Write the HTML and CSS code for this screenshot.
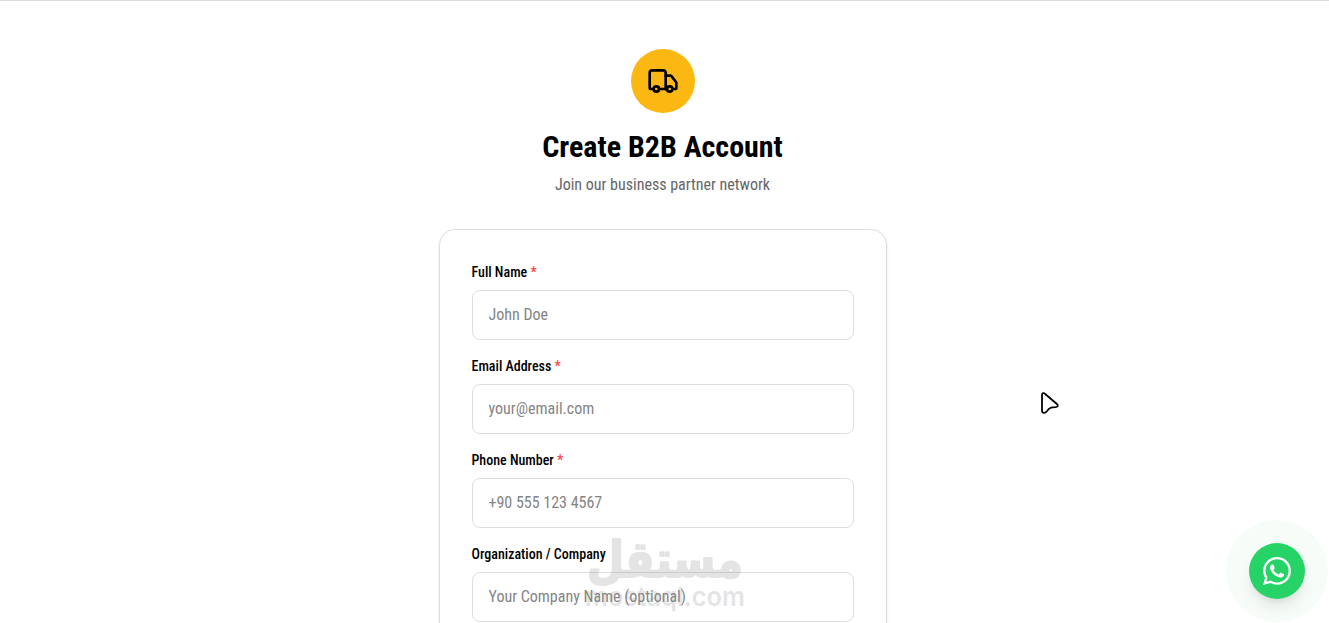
FILE: index.html
```html
<!DOCTYPE html>
<html lang="en">
<head>
  <meta charset="UTF-8" />
  <meta name="viewport" content="width=device-width, initial-scale=1" />
  <title>Create B2B Account</title>
  <link rel="stylesheet" href="styles.css">
</head>
<body>
  <main>
    <header>
      <div class="header-icon">
        <svg width="32" height="32" viewBox="0 0 24 24" fill="none" stroke="currentColor" stroke-width="2" stroke-linecap="round" stroke-linejoin="round">
          <path d="M14 18V6a2 2 0 0 0-2-2H4a2 2 0 0 0-2 2v11a1 1 0 0 0 1 1h2" />
          <path d="M15 18H9" />
          <path d="M19 18h2a1 1 0 0 0 1-1v-3.65a1 1 0 0 0-.22-.624l-3.48-4.35A1 1 0 0 0 17.52 8H14" />
          <circle cx="17" cy="18" r="2" />
          <circle cx="7" cy="18" r="2" />
        </svg>
      </div>
      <h1>Create B2B Account</h1>
      <p>Join our business partner network</p>
    </header>

    <form class="card">
      <div class="field">
        <label for="fullName">Full Name <span class="required">*</span></label>
        <input type="text" id="fullName" placeholder="John Doe" />
      </div>
      <div class="field">
        <label for="email">Email Address <span class="required">*</span></label>
        <input type="email" id="email" placeholder="your@email.com" />
      </div>
      <div class="field">
        <label for="phone">Phone Number <span class="required">*</span></label>
        <input type="tel" id="phone" placeholder="+90 555 123 4567" />
      </div>
      <div class="field">
        <label for="company">Organization / Company</label>
        <input type="text" id="company" placeholder="Your Company Name (optional)" />
      </div>
    </form>
  </main>

  <div class="watermark">
    <svg width="170" height="90" viewBox="0 0 170 90">
      <text class="watermark-ar" x="80" y="47" text-anchor="middle" textLength="156" lengthAdjust="spacingAndGlyphs">مستقل</text>
      <text class="watermark-en" x="0" y="76" textLength="160" lengthAdjust="spacingAndGlyphs">mostaql.com</text>
    </svg>
  </div>

  <svg class="cursor" width="20" height="24" viewBox="0 0 20 24" fill="#fff" stroke="#000" stroke-width="1.8" stroke-linejoin="round">
    <path d="M2 3.8C2 2 3.7 1.6 4.9 2.7L16.9 13C18.6 14.5 17.8 16 15.5 16.2C10.7 16.3 9.2 17 6.9 20.2C4.8 22.8 2 22.2 2 19.8Z" />
  </svg>

  <a class="whatsapp" href="#" aria-label="WhatsApp">
    <svg width="28" height="28" viewBox="0 0 24 24" fill="currentColor">
      <path d="M17.472 14.382c-.297-.149-1.758-.867-2.03-.967-.273-.099-.471-.148-.67.15-.197.297-.767.966-.94 1.164-.173.199-.347.223-.644.075-.297-.15-1.255-.463-2.39-1.475-.883-.788-1.48-1.761-1.653-2.059-.173-.297-.018-.458.13-.606.134-.133.298-.347.446-.52.149-.174.198-.298.298-.497.099-.198.05-.371-.025-.52-.075-.149-.669-1.612-.916-2.207-.242-.579-.487-.5-.669-.51-.173-.008-.371-.01-.57-.01-.198 0-.52.074-.792.372-.272.297-1.04 1.016-1.04 2.479 0 1.462 1.065 2.875 1.213 3.074.149.198 2.096 3.2 5.077 4.487.709.306 1.262.489 1.694.625.712.227 1.36.195 1.871.118.571-.085 1.758-.719 2.006-1.413.248-.694.248-1.289.173-1.413-.074-.124-.272-.198-.57-.347m-5.421 7.403h-.004a9.87 9.87 0 0 1-5.031-1.378l-.361-.214-3.741.982.998-3.648-.235-.374a9.86 9.86 0 0 1-1.51-5.26c.001-5.45 4.436-9.884 9.888-9.884 2.64 0 5.122 1.03 6.988 2.898a9.825 9.825 0 0 1 2.893 6.994c-.003 5.45-4.437 9.884-9.885 9.884m8.413-18.297A11.815 11.815 0 0 0 12.05 0C5.495 0 .16 5.335.157 11.892c0 2.096.547 4.142 1.588 5.945L.057 24l6.305-1.654a11.882 11.882 0 0 0 5.683 1.448h.005c6.554 0 11.89-5.335 11.893-11.893a11.821 11.821 0 0 0-3.48-8.413Z" />
    </svg>
  </a>
</body>
</html>
```

FILE: styles.css
```css
:root {
  --accent-color: #fbb812;
  --text-color: #000;
  --text-muted: #666;
  --border-color: #dedede;
  --whatsapp: #25d366;
}

* {
  box-sizing: border-box;
}

body {
  margin: 0;
  height: 100vh;
  overflow: hidden;
  border-top: 1px solid #dcdcdc;
  background: #fff;
  color: var(--text-color);
  font-family: 'Roboto Condensed', 'Roboto', sans-serif;
  font-stretch: 75%;
  font-size: 16px;
  line-height: 24px;
}

main {
  width: 448px;
  margin-left: 438.5px;
  padding-top: 48px;
}

header {
  display: flex;
  flex-direction: column;
  align-items: center;
  margin-bottom: 32px;
}

.header-icon {
  display: flex;
  align-items: center;
  justify-content: center;
  width: 64px;
  height: 64px;
  margin-bottom: 16px;
  border-radius: 50%;
  background: var(--accent-color);
}

h1 {
  margin: 0 0 8px;
  font-size: 30px;
  font-weight: 700;
  line-height: 36px;
}

header p {
  margin: 0;
  color: var(--text-muted);
}

.card {
  display: flex;
  flex-direction: column;
  gap: 16px;
  padding: 32px;
  border: 1px solid var(--border-color);
  border-radius: 16px;
  box-shadow: 0 1px 3px rgba(0,0,0,0.1);
}

label {
  display: block;
  margin-bottom: 8px;
  font-size: 14px;
  font-weight: 500;
  line-height: 20px;
}

.required {
  color: #fb4548;
}

input {
  display: block;
  width: 100%;
  height: 50px;
  padding: 11px 16px 13px;
  border: 1px solid var(--border-color);
  border-radius: 8px;
  background: #fff;
  font: inherit;
}

input::placeholder {
  color: #858585;
}

.watermark {
  position: absolute;
  left: 585px;
  top: 530px;
  opacity: 0.22;
}

.watermark-ar {
  font-family: 'DejaVu Sans', sans-serif;
  font-size: 50px;
  font-weight: 700;
  fill: #888;
  stroke: #888;
  stroke-width: 2;
  stroke-linejoin: round;
}

.watermark-en {
  font-family: 'Inter', sans-serif;
  font-stretch: 100%;
  font-size: 26px;
  font-weight: 600;
  fill: #888;
}

.cursor {
  position: absolute;
  left: 1040px;
  top: 391px;
}

.whatsapp {
  position: fixed;
  right: 24px;
  bottom: 24px;
  display: flex;
  align-items: center;
  justify-content: center;
  width: 56px;
  height: 56px;
  border-radius: 50%;
  background: var(--whatsapp);
  color: #fff;
  box-shadow: 0 10px 15px -3px rgba(0,0,0,0.1), 0 4px 6px -4px rgba(0,0,0,0.1), 0 0 0 23px #f6fdf9;
}
```
